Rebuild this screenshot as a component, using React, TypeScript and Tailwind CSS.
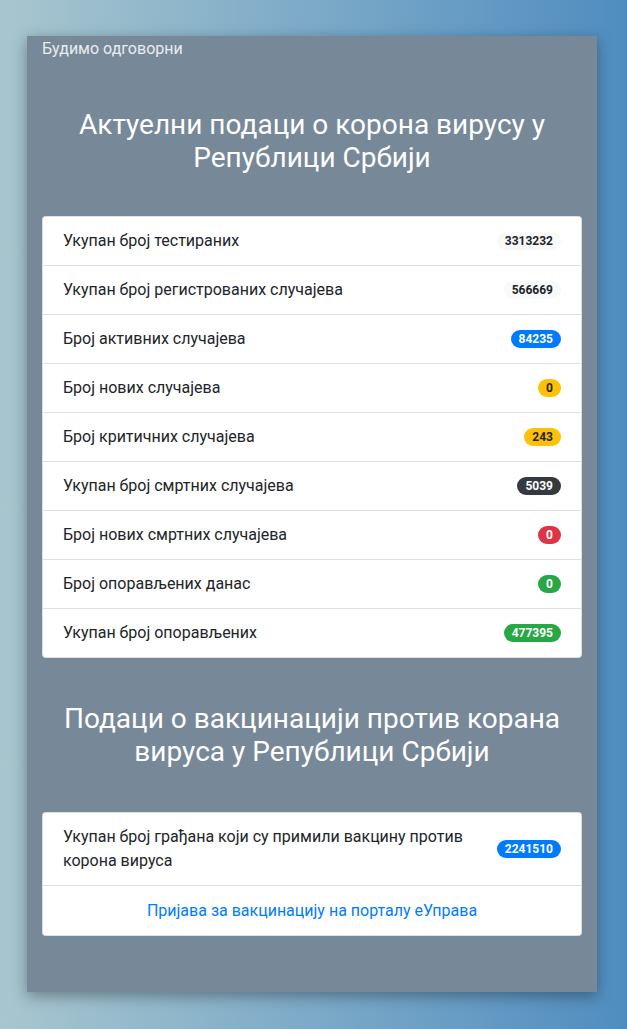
import React from 'react';

type Stat = { label: string; value: string; tone: string };

const STATS: Stat[] = [
  { label: 'Укупан број тестираних', value: '3313232', tone: 'bg-[#f8f9fa] text-[#212529]' },
  { label: 'Укупан број регистрованих случајева', value: '566669', tone: 'bg-[#f8f9fa] text-[#212529]' },
  { label: 'Број активних случајева', value: '84235', tone: 'bg-[#007bff] text-white' },
  { label: 'Број нових случајева', value: '0', tone: 'bg-[#ffc107] text-[#212529]' },
  { label: 'Број критичних случајева', value: '243', tone: 'bg-[#ffc107] text-[#212529]' },
  { label: 'Укупан број смртних случајева', value: '5039', tone: 'bg-[#343a40] text-white' },
  { label: 'Број нових смртних случајева', value: '0', tone: 'bg-[#dc3545] text-white' },
  { label: 'Број опорављених данас', value: '0', tone: 'bg-[#28a745] text-white' },
  { label: 'Укупан број опорављених', value: '477395', tone: 'bg-[#28a745] text-white' },
];

const Badge: React.FC<{ value: string; tone: string }> = ({ value, tone }) => (
  <span className={`inline-block shrink-0 rounded-full px-[8px] py-[3px] text-[12px] font-bold leading-[12px] ${tone}`}>
    {value}
  </span>
);

const App: React.FC = () => {
  return (
    <div
      className="min-h-screen bg-gradient-to-r from-[#a8c6ce] to-[#4f8dc0] pt-[36px] pb-[37px]"
      style={{ fontFamily: 'Roboto, "Noto Sans", sans-serif' }}
    >
      <div className="ml-[27px] w-[570px] bg-[#778899] px-[15px] pb-[56px] shadow-[0_4px_14px_rgba(0,0,0,0.35)]">
        <div className="pt-[1px] text-[16px] leading-[24px] text-[#e9ecef]">Будимо одговорни</div>

        {/* Corona stats */}
        <h3 className="mt-[47px] px-[10px] text-center text-[28px] font-normal leading-[33px] text-white">
          Актуелни подаци о корона вирусу у Републици Србији
        </h3>

        <ul className="mt-[42px] overflow-hidden rounded-[4px] border border-black/[0.125] bg-white">
          {STATS.map((s, i) => (
            <li
              key={s.label}
              className={`flex items-center justify-between px-[20px] py-[12px] text-[16px] leading-[24px] text-[#212529] ${
                i > 0 ? 'border-t border-black/[0.125]' : ''
              }`}
            >
              <span>{s.label}</span>
              <Badge value={s.value} tone={s.tone} />
            </li>
          ))}
        </ul>

        {/* Vaccination */}
        <h3 className="mt-[44px] px-[10px] text-center text-[28px] font-normal leading-[33px] text-white">
          Подаци о вакцинацији против корана вируса у Републици Србији
        </h3>

        <ul className="mt-[44px] overflow-hidden rounded-[4px] border border-black/[0.125] bg-white">
          <li className="flex items-center justify-between px-[20px] py-[12px] text-[16px] leading-[24px] text-[#212529]">
            <span className="max-w-[410px]">Укупан број грађана који су примили вакцину против корона вируса</span>
            <Badge value="2241510" tone="bg-[#007bff] text-white" />
          </li>
          <li className="border-t border-black/[0.125] px-[20px] pt-[13px] pb-[12px] text-center text-[16px] leading-[24px]">
            <a href="#" className="text-[#007bff]">
              Пријава за вакцинацију на порталу еУправа
            </a>
          </li>
        </ul>
      </div>
    </div>
  );
};

export default App;
